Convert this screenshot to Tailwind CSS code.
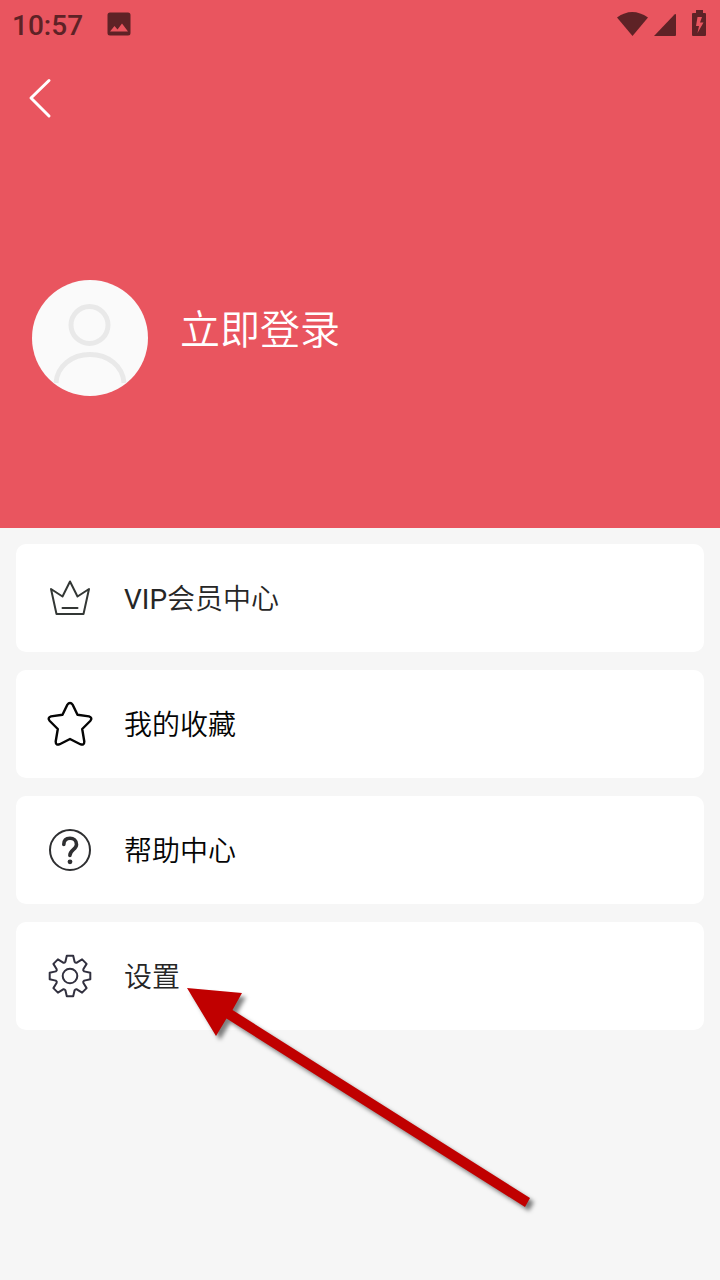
<!DOCTYPE html>
<html lang="zh-CN">
<head>
<meta charset="utf-8">
<meta name="viewport" content="width=device-width, initial-scale=1">
<title>我的</title>
<script src="https://cdn.jsdelivr.net/npm/@tailwindcss/browser@4"></script>
</head>
<body class="relative min-h-screen bg-[#f6f6f6] font-['Roboto','Noto_Sans_CJK_SC',sans-serif]">
<header class="bg-[#e9555f] pb-[132px] text-white">
  <div class="flex h-12 items-center pr-3 pl-3 text-[#5e2226]">
    <span class="pt-1 text-[28px] leading-8 font-medium">10:57</span>
    <svg class="ml-6 size-6" viewBox="0 0 24 24" fill="currentColor" aria-hidden="true"><path fill-rule="evenodd" d="M3 .5h18a2.500 2.500 0 0 1 2.500 2.500v18a2.500 2.500 0 0 1-2.500 2.500H3A2.500 2.500 0 0 1 .5 21V3A2.500 2.500 0 0 1 3 .5ZM3 19.500h18l-6-8-4.500 6-3-3.500Z"/></svg>
    <svg class="ml-auto h-7 w-8" viewBox="0 0 32 28" fill="currentColor" aria-hidden="true"><path d="M1 7.500Q16-3.500 32 7.500L16.500 26Z"/></svg>
    <svg class="ml-1 size-7" viewBox="0 0 28 28" fill="currentColor" aria-hidden="true"><path d="M2 26 22.500 4.500Q24 3.500 24 5v20q0 1-1 1Z"/></svg>
    <svg class="ml-3 h-7 w-4" viewBox="0 0 16 28" fill="currentColor" aria-hidden="true"><path fill-rule="evenodd" d="M4 0h7v3h2q1 0 1 1v21q0 1-1 1H1q-1 0-1-1V4q0-1 1-1h3ZM5.500 7 4 16h3L5.500 23 11.500 12.500H8L10 7Z"/></svg>
  </div>
  <div class="px-6 pt-7">
    <button type="button" aria-label="返回" class="block h-11 w-8"><svg class="h-11 w-8" viewBox="0 0 32 44" fill="none" stroke="#fff" stroke-width="3" stroke-linecap="round" stroke-linejoin="round"><path d="M25 4.500 7 22l18 18"/></svg></button>
  </div>
  <a href="#login" class="mt-40 flex items-start gap-8 px-8">
    <svg class="size-[116px] shrink-0 rounded-full bg-[#fafafa]" viewBox="0 0 116 116" fill="none" stroke="#e9e9e9" stroke-width="5" role="img" aria-label="头像"><circle cx="57.500" cy="45" r="18.500"/><path d="M24 103C25 86 40 74.500 58 74.500S91 86 92 103"/></svg>
    <span class="mt-[26px] text-[40px] leading-[50px] font-[350]">立即登录</span>
  </a>
</header>
<nav class="flex flex-col gap-[18px] p-4">
  <a href="#vip" class="flex h-[108px] items-center gap-8 rounded-[10px] bg-white px-8 text-[28px] leading-10 font-[350] text-[#262626]">
    <svg class="size-11" viewBox="0 0 44 44" fill="none" stroke="#333735" stroke-width="2" stroke-linejoin="round" aria-hidden="true"><path d="M3 13 14.500 20.500 22 5.500l7.500 15L41 13 35.500 38h-27Z"/><path d="M14.500 32h15" stroke-linecap="round"/></svg>
    <span class="pt-1"><span class="font-normal">VIP</span>会员中心</span>
  </a>
  <a href="#favorites" class="flex h-[108px] items-center gap-8 rounded-[10px] bg-white px-8 text-[28px] leading-10 font-[350] text-[#050505]">
    <svg class="size-11 overflow-visible" viewBox="0 0 44 44" fill="none" stroke="#050505" stroke-width="2.400" stroke-linejoin="round" aria-hidden="true"><path d="M19.200 2.900Q22-.9 24.800 2.900L29.500 12.800 41 14.400Q45 15.800 42.200 19L34.200 27 36.300 39.500Q36.300 43.800 32.300 42.200L22 37 11.700 42.200Q7.700 43.800 7.700 39.500L9.800 27 1.800 19Q-1 15.800 3 14.400L14.500 12.800Z"/></svg>
    <span class="pt-1">我的收藏</span>
  </a>
  <a href="#help" class="flex h-[108px] items-center gap-8 rounded-[10px] bg-white px-8 text-[28px] leading-10 font-[350] text-[#050505]">
    <svg class="size-11" viewBox="0 0 44 44" fill="none" stroke="#2e2f31" stroke-width="2" aria-hidden="true"><circle cx="22" cy="22" r="20"/><path d="M15.800 16.500C15.800 12 18.500 10.200 22 10.200s6.500 2.300 6.500 6.200c0 5.200-6.600 5.400-6.600 11.100" stroke-width="3.600" stroke-linecap="round"/><circle cx="22" cy="33.800" r="2.400" fill="#2e2f31" stroke="none"/></svg>
    <span class="pt-1">帮助中心</span>
  </a>
  <a href="#settings" class="flex h-[108px] items-center gap-8 rounded-[10px] bg-white px-8 text-[28px] leading-10 font-[350] text-[#262626]">
    <svg class="size-11" viewBox="-22 -22 44 44" fill="none" stroke="#31303f" stroke-width="2" stroke-linejoin="round" aria-hidden="true"><path d="M-4.600-14.200-3.200-20.300H3.200L4.600-14.200Q5.500-12.800 6.800-13.300L12.100-16.600 16.600-12.100 13.300-6.800Q12.800-5.500 14.200-4.600L20.300-3.200V3.200L14.200 4.600Q12.800 5.500 13.300 6.800L16.600 12.100 12.100 16.600 6.800 13.300Q5.500 12.800 4.600 14.200L3.200 20.300H-3.200L-4.600 14.200Q-5.500 12.800-6.800 13.300L-12.100 16.600-16.600 12.100-13.300 6.800Q-12.800 5.500-14.200 4.600L-20.300 3.200V-3.200L-14.200-4.600Q-12.800-5.500-13.300-6.800L-16.600-12.100-12.100-16.600-6.800-13.300Q-5.500-12.800-4.600-14.200Z"/><circle r="7.300"/></svg>
    <span class="pt-1">设置</span>
  </a>
</nav>
<svg class="pointer-events-none absolute top-[980px] left-[180px] h-60 w-[370px] drop-shadow-[4px_4px_2px_rgba(0,0,0,0.5)]" viewBox="180 980 370 240" aria-hidden="true"><path fill="#c00000" d="M187 988 242 993 232.500 1010 530 1198 525 1207 226.500 1018.500 216 1036Z"/></svg>
</body>
</html>
